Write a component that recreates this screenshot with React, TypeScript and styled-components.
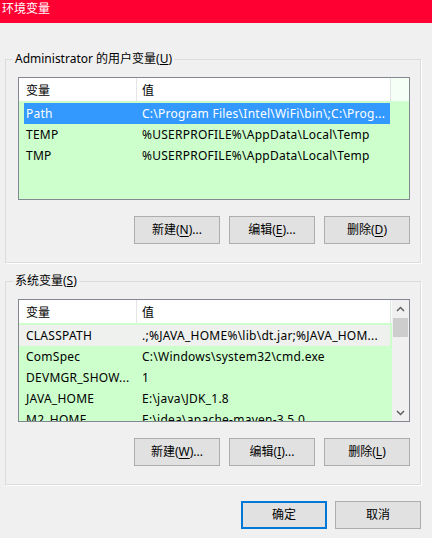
import React from 'react'
import styled, { createGlobalStyle } from 'styled-components'

const GlobalStyle = createGlobalStyle`
  html, body {
    margin: 0;
    padding: 0;
    background: #f0f0f0;
  }
  body {
    font-family: 'Noto Sans', 'Noto Sans CJK SC', sans-serif;
    font-size: 12px;
    color: #000;
  }
`

const Window = styled.div`
  width: 432px;
  height: 538px;
  overflow: hidden;
  display: flex;
  flex-direction: column;
  background: #f0f0f0;
`

const TitleBar = styled.div`
  height: 23px;
  flex: none;
  background: #ff0033;
  color: #fff;
  padding: 1px 0 0 2px;
  box-sizing: border-box;
  line-height: 16px;
  font-size: 12px;
`

const Content = styled.div`
  padding: 0 11px 0 5px;
  display: flex;
  flex-direction: column;
`

const Group = styled.fieldset<{ $top: number }>`
  margin: ${(p) => p.$top}px 0 0 0;
  padding: 10px 10px 18px 12px;
  border: 1px solid #dcdcdc;
  box-shadow: 1px 1px 0 #fff;
  min-width: 0;
  display: flex;
  flex-direction: column;
`

const Legend = styled.legend`
  padding: 0 2px;
  margin-left: -5px;
  line-height: 16px;
  font-size: 12px;
`

const List = styled.div`
  height: 123px;
  box-sizing: border-box;
  border: 1px solid #828790;
  background: #ccffcc;
  display: flex;
  overflow: hidden;
`

const ListMain = styled.div`
  flex: 1;
  min-width: 0;
  display: flex;
  flex-direction: column;
`

const Header = styled.div`
  height: 23px;
  flex: none;
  display: flex;
  background: #f6fff6;
`

const HeadCell = styled.div<{ $w: number; $pad: number }>`
  width: ${(p) => p.$w}px;
  flex: none;
  box-sizing: border-box;
  padding: 2px 0 0 ${(p) => p.$pad}px;
  background: #fff;
  border-right: 1px solid #e5e5e5;
  line-height: 21px;
`

const Rows = styled.div`
  padding-top: 2px;
  display: flex;
  flex-direction: column;
`

const Row = styled.div<{ $state?: 'selected' | 'hot' }>`
  height: 21px;
  flex: none;
  display: flex;
  width: ${(p) => (p.$state === 'selected' ? 366 : 371)}px;
  margin-left: ${(p) => (p.$state === 'selected' ? 5 : 0)}px;
  line-height: 21px;
  white-space: nowrap;
  letter-spacing: 0.25px;
  background: ${(p) =>
    p.$state === 'selected' ? '#3399ff' : p.$state === 'hot' ? '#eef1ee' : 'transparent'};
  color: ${(p) => (p.$state === 'selected' ? '#fff' : '#000')};
`

const Cell = styled.div<{ $w: number; $pad: number }>`
  width: ${(p) => p.$w}px;
  flex: none;
  box-sizing: border-box;
  padding-left: ${(p) => p.$pad}px;
  overflow: hidden;
`

const ScrollBar = styled.div`
  width: 17px;
  flex: none;
  background: #f0f0f0;
  display: flex;
  flex-direction: column;
`

const ScrollArrow = styled.div`
  height: 17px;
  flex: none;
  display: flex;
  align-items: center;
  justify-content: center;
`

const ScrollTrack = styled.div`
  flex: 1;
  padding: 1px 1px 0 1px;
`

const Thumb = styled.div`
  height: 19px;
  background: #cdcdcd;
`

const ButtonRow = styled.div<{ $top: number }>`
  display: flex;
  justify-content: flex-end;
  gap: 9px;
  margin-top: ${(p) => p.$top}px;
`

const Button = styled.button<{ $default?: boolean }>`
  width: 86px;
  height: 28px;
  box-sizing: border-box;
  margin: 0;
  padding: 0;
  background: #e1e1e1;
  border: ${(p) => (p.$default ? '2px solid #0078d7' : '1px solid #adadad')};
  font-family: inherit;
  font-size: 12px;
  color: #000;
  line-height: 16px;
  u {
    text-underline-offset: 2px;
  }
`

const Footer = styled.div`
  display: flex;
  justify-content: flex-end;
  gap: 8px;
  padding: 16px 11px 0 0;
`

type Item = { name: string; value: string; state?: 'selected' | 'hot' }

const userVars: Item[] = [
  { name: 'Path', value: 'C:\\Program Files\\Intel\\WiFi\\bin\\;C:\\Prog...', state: 'selected' },
  { name: 'TEMP', value: '%USERPROFILE%\\AppData\\Local\\Temp' },
  { name: 'TMP', value: '%USERPROFILE%\\AppData\\Local\\Temp' },
]

const sysVars: Item[] = [
  { name: 'CLASSPATH', value: '.;%JAVA_HOME%\\lib\\dt.jar;%JAVA_HOM...', state: 'hot' },
  { name: 'ComSpec', value: 'C:\\Windows\\system32\\cmd.exe' },
  { name: 'DEVMGR_SHOW...', value: '1' },
  { name: 'JAVA_HOME', value: 'E:\\java\\JDK_1.8' },
  { name: 'M2_HOME', value: 'E:\\idea\\apache-maven-3.5.0' },
]

const Chevron = ({ up }: { up?: boolean }) => (
  <svg width="9" height="6" viewBox="0 0 9 6">
    <path
      d={up ? 'M1 5 L4.5 1.5 L8 5' : 'M1 1 L4.5 4.5 L8 1'}
      fill="none"
      stroke="#606060"
      strokeWidth="1.5"
    />
  </svg>
)

const VarList = ({ items, scroll }: { items: Item[]; scroll?: boolean }) => (
  <List>
    <ListMain>
      <Header>
        <HeadCell $w={118} $pad={7}>变量</HeadCell>
        <HeadCell $w={254} $pad={5}>值</HeadCell>
      </Header>
      <Rows>
        {items.map((it) => (
          <Row key={it.name} $state={it.state}>
            <Cell $w={it.state === 'selected' ? 113 : 118} $pad={it.state === 'selected' ? 2 : 7}>
              {it.name}
            </Cell>
            <Cell $w={253} $pad={5}>{it.value}</Cell>
          </Row>
        ))}
      </Rows>
    </ListMain>
    {scroll && (
      <ScrollBar>
        <ScrollArrow><Chevron up /></ScrollArrow>
        <ScrollTrack><Thumb /></ScrollTrack>
        <ScrollArrow><Chevron /></ScrollArrow>
      </ScrollBar>
    )}
  </List>
)

export default function App() {
  return (
    <>
      <GlobalStyle />
      <Window>
        <TitleBar>环境变量</TitleBar>
        <Content>
          <Group $top={28}>
            <Legend>Administrator 的用户变量(<u>U</u>)</Legend>
            <VarList items={userVars} />
            <ButtonRow $top={16}>
              <Button>新建(<u>N</u>)...</Button>
              <Button>编辑(<u>E</u>)...</Button>
              <Button>删除(<u>D</u>)</Button>
            </ButtonRow>
          </Group>
          <Group $top={10}>
            <Legend>系统变量(<u>S</u>)</Legend>
            <VarList items={sysVars} scroll />
            <ButtonRow $top={16}>
              <Button>新建(<u>W</u>)...</Button>
              <Button>编辑(<u>I</u>)...</Button>
              <Button>删除(<u>L</u>)</Button>
            </ButtonRow>
          </Group>
        </Content>
        <Footer>
          <Button $default>确定</Button>
          <Button>取消</Button>
        </Footer>
      </Window>
    </>
  )
}
